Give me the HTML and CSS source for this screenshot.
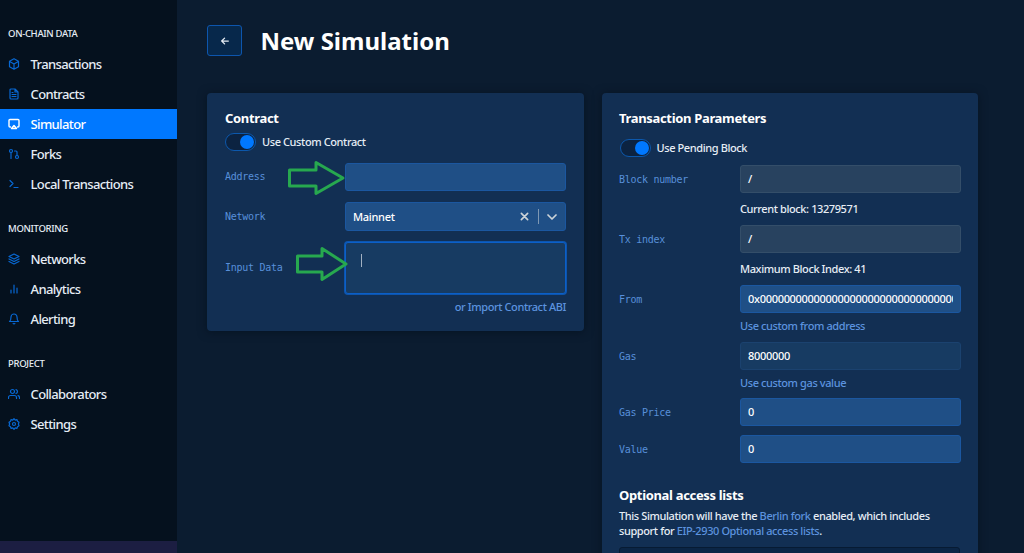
FILE: index.html
```html
<!DOCTYPE html>
<html lang="en">
<head>
<meta charset="utf-8">
<title>New Simulation</title>
<link rel="stylesheet" href="styles.css">
</head>
<body>
<div class="app">
  <aside class="sidebar">
    <nav class="nav">
      <section class="nav-group">
        <h2 class="nav-title">ON-CHAIN DATA</h2>
        <a class="nav-item"><svg class="icon" viewBox="0 0 24 24"><path d="M12 1.500l9 5v11l-9 5-9-5v-11zM3.300 7l8.700 5 8.700-5M12 12v10"/></svg><span>Transactions</span></a>
        <a class="nav-item"><svg class="icon" viewBox="0 0 24 24"><path d="M14 2H6a2 2 0 0 0-2 2v16a2 2 0 0 0 2 2h12a2 2 0 0 0 2-2V8zM14 2v6h6M16 13H8M16 17H8M10 9H8"/></svg><span>Contracts</span></a>
        <a class="nav-item active"><svg class="icon" viewBox="0 0 24 24"><path d="M5 18H4a2 2 0 0 1-2-2V5a2 2 0 0 1 2-2h16a2 2 0 0 1 2 2v11a2 2 0 0 1-2 2h-1"/><path d="M12 15l5 6H7z"/></svg><span>Simulator</span></a>
        <a class="nav-item"><svg class="icon" viewBox="0 0 24 24"><circle cx="18" cy="18" r="3"/><circle cx="6" cy="6" r="3"/><path d="M13 6h3a2 2 0 0 1 2 2v7M6 9v12"/></svg><span>Forks</span></a>
        <a class="nav-item"><svg class="icon" viewBox="0 0 24 24"><path d="M4 17l6-6-6-6M12 19h8"/></svg><span>Local Transactions</span></a>
      </section>
      <section class="nav-group">
        <h2 class="nav-title">MONITORING</h2>
        <a class="nav-item"><svg class="icon" viewBox="0 0 24 24"><path d="M12 2L2 7l10 5 10-5zM2 17l10 5 10-5M2 12l10 5 10-5"/></svg><span>Networks</span></a>
        <a class="nav-item"><svg class="icon" viewBox="0 0 24 24"><path d="M18 20V10M12 20V4M6 20v-6"/></svg><span>Analytics</span></a>
        <a class="nav-item"><svg class="icon" viewBox="0 0 24 24"><path d="M18 8A6 6 0 0 0 6 8c0 7-3 9-3 9h18s-3-2-3-9M13.700 21a2 2 0 0 1-3.400 0"/></svg><span>Alerting</span></a>
      </section>
      <section class="nav-group">
        <h2 class="nav-title">PROJECT</h2>
        <a class="nav-item"><svg class="icon" viewBox="0 0 24 24"><path d="M17 21v-2a4 4 0 0 0-4-4H5a4 4 0 0 0-4 4v2M23 21v-2a4 4 0 0 0-3-3.870M16 3.130a4 4 0 0 1 0 7.750"/><circle cx="9" cy="7" r="4"/></svg><span>Collaborators</span></a>
        <a class="nav-item"><svg class="icon" viewBox="0 0 24 24"><circle cx="12" cy="12" r="3"/><path d="M12 1.500l2.500 2.600 3.500-1 1 3.500 3 1.900-1.300 3.500 1.300 3.500-3 1.900-1 3.500-3.500-1L12 22.500l-2.500-2.600-3.500 1-1-3.500-3-1.900L3.300 12 2 8.500l3-1.900 1-3.500 3.500 1z"/></svg><span>Settings</span></a>
      </section>
    </nav>
    <div class="sidebar-footer"></div>
  </aside>
  <main class="main">
    <header class="header">
      <button class="back"><svg class="back-icon" viewBox="0 0 24 24"><path d="M20 12H4M11 5l-7 7 7 7"/></svg></button>
      <h1 class="title">New Simulation</h1>
    </header>
    <div class="columns">
      <section class="card contract">
        <h3 class="card-title">Contract</h3>
        <div class="switch-row"><span class="switch"></span><span>Use Custom Contract</span></div>
        <div class="row address-row">
          <label class="label">Address</label>
          <div class="input"></div>
          <svg class="pointer pointer-address" viewBox="0 0 60 36"><path d="M2.500 10H29V2.500L56 18 29 33.500V26H2.500z"/></svg>
        </div>
        <div class="row network-row">
          <label class="label">Network</label>
          <div class="select"><span class="select-value">Mainnet</span>
            <svg class="clear" viewBox="0 0 10 10"><path d="M1.500 1.500l7 7M8.500 1.500l-7 7"/></svg>
            <span class="separator"></span>
            <svg class="chevron" viewBox="0 0 10 10"><path d="M1 3l4 4 4-4"/></svg>
          </div>
        </div>
        <div class="row data-row">
          <label class="label">Input Data</label>
          <div class="textarea"><span class="caret"></span></div>
          <svg class="pointer pointer-data" viewBox="0 0 60 36"><path d="M2.500 10H27V2.500L51 18 27 33.500V26H2.500z"/></svg>
        </div>
        <a class="link import">or Import Contract ABI</a>
      </section>
      <section class="card params">
        <h3 class="card-title">Transaction Parameters</h3>
        <div class="switch-row"><span class="switch"></span><span>Use Pending Block</span></div>
        <div class="row"><label class="label">Block number</label><div class="input disabled">/</div></div>
        <p class="hint">Current block: 13279571</p>
        <div class="row"><label class="label">Tx index</label><div class="input disabled">/</div></div>
        <p class="hint">Maximum Block Index: 41</p>
        <div class="row"><label class="label">From</label><div class="input"><span class="clip">0x0000000000000000000000000000000000000000</span></div></div>
        <a class="hint link from-link">Use custom from address</a>
        <div class="row"><label class="label">Gas</label><div class="input readonly">8000000</div></div>
        <a class="hint link gas-link">Use custom gas value</a>
        <div class="row"><label class="label">Gas Price</label><div class="input">0</div></div>
        <div class="row value-row"><label class="label">Value</label><div class="input">0</div></div>
        <h3 class="card-title optional">Optional access lists</h3>
        <p class="copy">This Simulation will have the <a class="link">Berlin fork</a> enabled, which includes<br>support for <a class="link">EIP-2930 Optional access lists</a>.</p>
        <div class="access-box"></div>
      </section>
    </div>
  </main>
</div>
</body>
</html>
```
FILE: styles.css
```css
* { box-sizing: border-box; }
body {
  margin: 0;
  background: #0b1c30;
  color: #e6edf5;
  font: 500 11px/16px "Noto Sans", "Open Sans", sans-serif;
  letter-spacing: -.4px;
}
h1, h2, h3, p { margin: 0; }
svg { fill: none; stroke: currentColor; stroke-linecap: round; stroke-linejoin: round; }
.app { display: flex; height: 553px; overflow: hidden; }

.sidebar { width: 177px; flex: none; display: flex; flex-direction: column; background: #05111e; }
.nav { flex: 1; padding-top: 19px; }
.nav-group { margin-bottom: 15px; }
.nav-title { height: 30px; padding-left: 8px; font-size: 9.5px; line-height: 30px; font-weight: 500; letter-spacing: -.32px; }
.nav-item { display: flex; align-items: center; gap: 10.5px; height: 30px; padding-left: 8px; font-size: 13px; line-height: 30px; letter-spacing: -.63px; color: #e6edf5; }
.nav-item.active { background: #0078ff; color: #fff; }
.icon { width: 12px; height: 12px; stroke-width: 2.400; color: #0868d3; }
.active .icon { color: #fff; stroke-width: 2.8; }
.sidebar-footer { height: 12px; background: #1c1e42; }

.main { flex: 1; padding: 25px 45px 0 30px; }
.header { display: flex; align-items: center; gap: 18.5px; height: 31px; }
.back { display: flex; align-items: center; justify-content: center; width: 35px; height: 31px; padding: 0; background: #07284b; border: 1px solid #0d56ae; border-radius: 3px; color: #e6edf5; }
.back-icon { width: 10px; height: 10px; stroke-width: 3; }
.title { font-size: 24px; line-height: 31px; font-weight: 700; letter-spacing: 0; color: #fff; }
.columns { display: grid; grid-template-columns: 377px 376px; gap: 18px; align-items: start; margin-top: 37px; }
.card { background: #122f53; border-radius: 4px; padding: 16px 18px 0 18px; box-shadow: 0 1px 10px rgba(2, 12, 24, .55); }
.contract { height: 238px; }
.params { height: 480px; padding-left: 17px; }
.card-title { font-size: 13px; line-height: 18px; font-weight: 700; letter-spacing: -.33px; color: #fff; }
.switch-row { display: flex; align-items: center; gap: 6px; height: 18px; margin-top: 6px; }
.switch { display: flex; justify-content: flex-end; align-items: center; width: 31px; height: 18px; padding: 1px; background: #0c2341; border: 1px solid #0c58ac; border-radius: 9px; }
.switch::after { content: ""; width: 14px; height: 14px; border-radius: 50%; background: #0078ff; }
.row { position: relative; display: grid; grid-template-columns: 121px 220.5px; align-items: center; }
.contract .row { grid-template-columns: 120px 221px; }
.label { color: #588fda; font: 10px/14px "DejaVu Sans Mono", monospace; letter-spacing: -.28px; }
.params .label { padding-top: 1px; }
.input { height: 28px; padding: 0 7px; line-height: 26px; letter-spacing: -.3px; background: #1f4f86; border: 1px solid #1b57a0; border-radius: 3px; color: #fff; }
.input.disabled { background: #28425f; border-color: #344e69; }
.input.readonly { background: #173b62; border-color: #1b426f; }
.clip { display: block; overflow: hidden; white-space: nowrap; }
.link { color: #5c93df; }

.address-row { margin-top: 12px; }
.network-row { margin-top: 11px; }
.select { display: flex; align-items: center; height: 29px; padding: 0 8px 0 7px; background: #1f4f86; border: 1px solid #1b57a0; border-radius: 3px; color: #fff; }
.select-value { flex: 1; letter-spacing: -.3px; }
.clear { width: 9px; height: 9px; stroke-width: 1.800; color: #ccd3d8; }
.separator { width: 1px; height: 15px; margin: 0 8px 0 9px; background: #7e98b4; }
.chevron { width: 10px; height: 10px; stroke-width: 1.700; color: #ccd3d8; }
.data-row { margin-top: 11px; }
.textarea { height: 52px; padding: 11px 15px; background: #173b62; border: 1px solid #0b5fc8; border-radius: 3px; box-shadow: 0 0 0 1px #0d55ae; }
.caret { display: block; width: 1px; height: 13px; background: #a2b1c2; }
.pointer { position: absolute; width: 60px; height: 36px; stroke: #27a84f; stroke-width: 3; }
.pointer-address { left: 62px; top: -3px; }
.pointer-data { left: 70px; top: 4px; }
.import { display: block; margin-top: 5px; text-align: right; }

.params .switch-row { margin-top: 12px; margin-bottom: 8px; padding-left: .5px; }
.hint { display: block; height: 32px; padding-left: 121px; line-height: 32px; }
.from-link { height: 29px; line-height: 26px; }
.gas-link { height: 28px; line-height: 26px; }
.value-row { margin-top: 9px; }
.optional { margin-top: 23px; }
.copy { margin-top: 5px; line-height: 14.500px; letter-spacing: -.4px; }
.access-box { height: 28px; margin-top: 9px; background: #0b2545; border: 1px solid #071b33; border-radius: 3px; }
```
